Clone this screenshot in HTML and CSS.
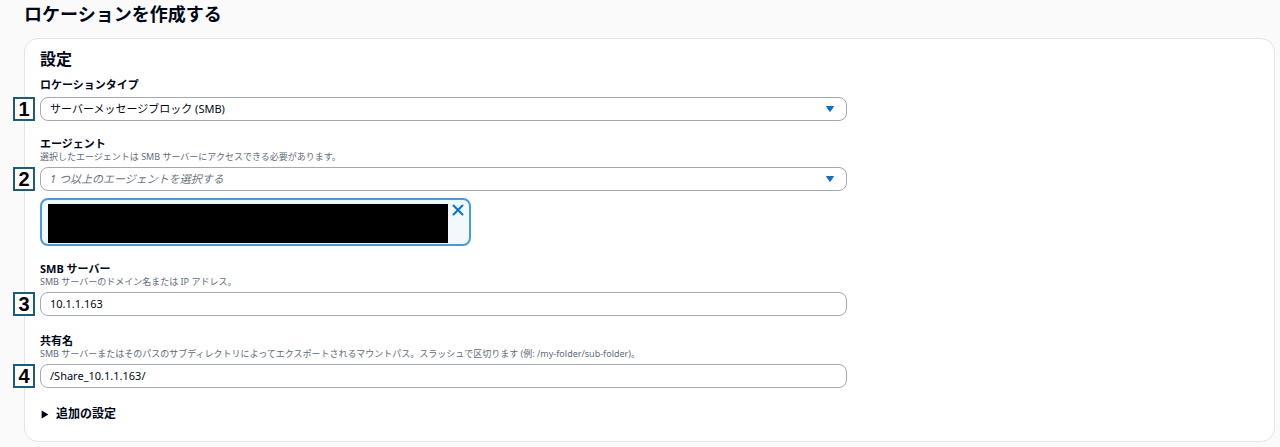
FILE: index.html
```html
<!DOCTYPE html>
<html lang="ja">

<head>
  <meta charset="UTF-8">
  <meta name="viewport" content="width=device-width, initial-scale=1.0">
  <title>ロケーションを作成する</title>
  <link rel="stylesheet" href="styles.css">
</head>

<body>
  <h1 class="page-title">ロケーションを作成する</h1>

  <section class="card">
    <h2 class="card-title">設定</h2>

    <!-- ロケーションタイプ -->
    <div class="field field-first">
      <div class="label">ロケーションタイプ</div>
      <div class="control">
        <span class="badge">1</span>
        <span class="value">サーバーメッセージブロック (SMB)</span>
        <svg class="caret" width="8" height="6" viewBox="0 0 8 6"><path d="M0.5 0.5 H7.5 L4 5.5 Z" fill="#0972d3" stroke="#0972d3" stroke-linejoin="round"/></svg>
      </div>
    </div>

    <!-- エージェント -->
    <div class="field">
      <div class="label">エージェント</div>
      <div class="desc">選択したエージェントは SMB サーバーにアクセスできる必要があります。</div>
      <div class="control">
        <span class="badge">2</span>
        <span class="value placeholder">1 つ以上のエージェントを選択する</span>
        <svg class="caret" width="8" height="6" viewBox="0 0 8 6"><path d="M0.5 0.5 H7.5 L4 5.5 Z" fill="#0972d3" stroke="#0972d3" stroke-linejoin="round"/></svg>
      </div>
      <div class="token">
        <div class="token-hidden"></div>
        <svg class="token-close" width="12" height="12" viewBox="0 0 12 12"><path d="M1.5 1.5 L10.5 10.5 M10.5 1.5 L1.5 10.5" stroke="#0972d3" stroke-width="2" stroke-linecap="round"/></svg>
      </div>
    </div>

    <!-- SMB サーバー -->
    <div class="field">
      <div class="label">SMB サーバー</div>
      <div class="desc">SMB サーバーのドメイン名または IP アドレス。</div>
      <div class="control">
        <span class="badge">3</span>
        <span class="value">10.1.1.163</span>
      </div>
    </div>

    <!-- 共有名 -->
    <div class="field field-share">
      <div class="label">共有名</div>
      <div class="desc">SMB サーバーまたはそのパスのサブディレクトリによってエクスポートされるマウントパス。スラッシュで区切ります (例: /my-folder/sub-folder)。</div>
      <div class="control">
        <span class="badge">4</span>
        <span class="value">/Share_10.1.1.163/</span>
      </div>
    </div>

    <div class="expander">
      <svg width="7" height="8" viewBox="0 0 7 8"><path d="M0.5 0.5 L6.5 4 L0.5 7.5 Z" fill="#000716"/></svg>
      <span>追加の設定</span>
    </div>
  </section>
</body>

</html>
```

FILE: styles.css
```css
* {
  margin: 0;
  padding: 0;
  box-sizing: border-box;
}

body {
  font-family: 'Noto Sans', 'Noto Sans CJK JP', sans-serif;
  background: #fafafa;
  color: #000716;
}

.page-title {
  font-size: 18px;
  line-height: 28px;
  font-weight: bold;
  padding-left: 24px;
}

.card {
  margin: 10px 5px 0 24px;
  background: #fff;
  border: 1px solid #e3e3e8;
  border-radius: 14px;
  padding: 10px 15px 19px;
}

.card-title {
  font-size: 16px;
  line-height: 20px;
  font-weight: bold;
}

.field {
  margin-top: 16px;
}

.field-first {
  margin-top: 9px;
}

.field-share {
  margin-top: 18px;
}

.label {
  font-size: 11px;
  line-height: 14px;
  font-weight: bold;
}

.desc {
  font-size: 9px;
  line-height: 12px;
  color: #5f6b7a;
}

.control {
  position: relative;
  display: flex;
  align-items: center;
  width: 807px;
  height: 24px;
  margin-top: 4px;
  padding: 0 12px 0 9px;
  border: 1px solid #a4a8b0;
  border-radius: 8px;
  background: #fff;
  font-size: 11px;
}

.field-first .control {
  margin-top: 5px;
}

.value {
  line-height: 16px;
}

.placeholder {
  color: #6b7480;
  font-style: italic;
}

.caret {
  margin-left: auto;
}

/* 番号の注記 */
.badge {
  position: absolute;
  left: -28px;
  top: -1px;
  width: 22px;
  height: 24px;
  border: 2px solid #1d5b7b;
  background: #fff;
  font-family: 'Liberation Sans', sans-serif;
  font-size: 20px;
  line-height: 20px;
  font-weight: bold;
  text-align: center;
  color: #000;
}

.token {
  display: flex;
  align-items: flex-start;
  gap: 4px;
  width: 431px;
  height: 48px;
  margin-top: 7px;
  padding: 4px 5px 0 6px;
  border: 2px solid #4b98e2;
  border-radius: 8px;
  background: #f1f8fe;
}

.token-hidden {
  width: 401px;
  height: 39px;
  background: #000;
}

.expander {
  display: flex;
  align-items: center;
  gap: 7px;
  margin-top: 18px;
  padding-left: 1px;
  font-size: 12px;
  line-height: 16px;
  font-weight: bold;
}

.expander svg {
  width: 8px;
  height: 9px;
}
```
